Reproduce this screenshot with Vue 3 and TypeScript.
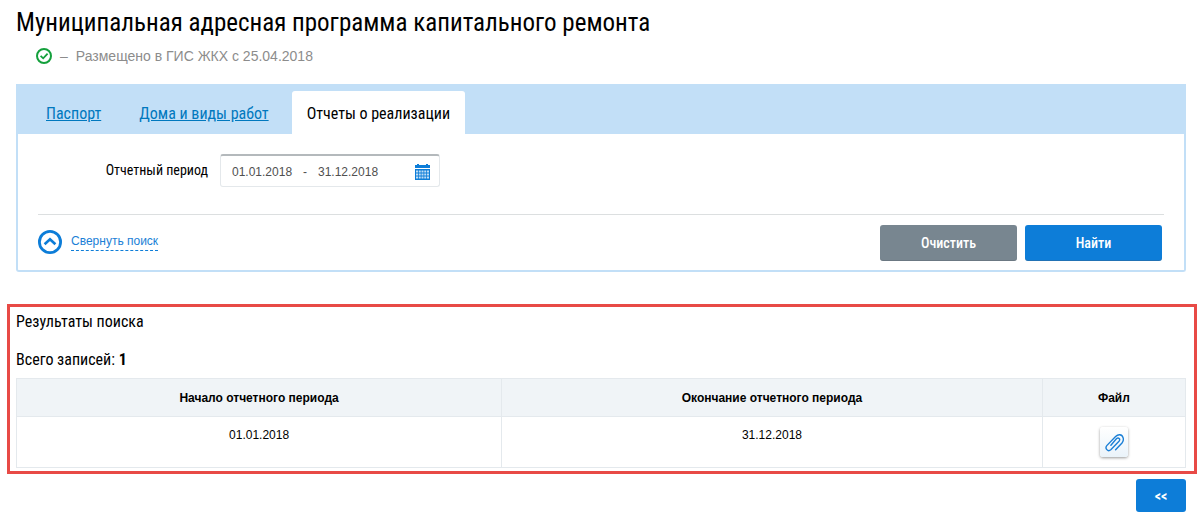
<script setup lang="ts">
import { ref } from 'vue'

interface Report {
  start: string
  end: string
}

const tabs = ['Паспорт', 'Дома и виды работ', 'Отчеты о реализации']
const activeTab = ref(2)
const periodStart = ref('01.01.2018')
const periodEnd = ref('31.12.2018')
const reports: Report[] = [{ start: '01.01.2018', end: '31.12.2018' }]

function clearPeriod(): void {
  periodStart.value = ''
  periodEnd.value = ''
}
</script>

<template>
  <main class="page">
    <header class="inset">
      <h1 class="title">Муниципальная адресная программа капитального ремонта</h1>
      <p class="status">
        <svg class="status-icon" viewBox="0 0 16 16" aria-hidden="true">
          <circle cx="8" cy="8" r="7" fill="none" stroke="#14a03c" stroke-width="2" />
          <path d="M4.6 7.8 7.2 10.3 11.6 5.6" fill="none" stroke="#14a03c" stroke-width="1.8" />
        </svg>
        <span>–</span>
        <span>Размещено в ГИС ЖКХ с 25.04.2018</span>
      </p>
    </header>

    <section class="panel">
      <nav class="tabs">
        <a
          v-for="(tab, i) in tabs"
          :key="tab"
          href="#"
          class="tab"
          :class="{ active: i === activeTab }"
          @click.prevent="activeTab = i"
        >{{ tab }}</a>
      </nav>
      <form class="search" @submit.prevent>
        <div class="field">
          <label class="label" for="period-start">Отчетный период</label>
          <div class="range">
            <input id="period-start" v-model="periodStart" class="date" type="text" />
            <span class="dash">-</span>
            <input v-model="periodEnd" class="date" type="text" aria-label="Конец отчетного периода" />
            <button class="calendar" type="button" aria-label="Календарь">
              <svg viewBox="0 0 15 16" aria-hidden="true">
                <path d="M0 1h2V0h2v1h7V0h2v1h2v3H0z" fill="#0d7dd8" />
                <path d="M0 5h15v11H0z" fill="#0d7dd8" />
                <path
                  d="M1 7.500h13M1 10.500h13M1 13.500h13"
                  stroke="#fff"
                  stroke-width="2"
                  stroke-dasharray="2 .75"
                  fill="none"
                  opacity=".75"
                />
              </svg>
            </button>
          </div>
        </div>
        <div class="actions">
          <button class="collapse" type="button">
            <svg class="collapse-icon" viewBox="0 0 24 24" aria-hidden="true">
              <circle cx="12" cy="12" r="10.6" fill="none" stroke="#0d7dd8" stroke-width="2.8" />
              <path d="M6.600 14.300 12 9.200 17.400 14.300" fill="none" stroke="#0d7dd8" stroke-width="2.600" />
            </svg>
            <span class="collapse-text">Свернуть поиск</span>
          </button>
          <button class="button gray" type="button" @click="clearPeriod">Очистить</button>
          <button class="button" type="submit">Найти</button>
        </div>
      </form>
    </section>

    <section class="results">
      <h2 class="line">Результаты поиска</h2>
      <p class="line total">Всего записей: <b>{{ reports.length }}</b></p>
      <table class="table">
        <colgroup>
          <col class="col-start" />
          <col class="col-end" />
          <col />
        </colgroup>
        <thead>
          <tr>
            <th scope="col">Начало отчетного периода</th>
            <th scope="col">Окончание отчетного периода</th>
            <th scope="col">Файл</th>
          </tr>
        </thead>
        <tbody>
          <tr v-for="report in reports" :key="report.start">
            <td>{{ report.start }}</td>
            <td>{{ report.end }}</td>
            <td>
              <button class="file" type="button" aria-label="Файл">
                <svg viewBox="0 0 20 20" aria-hidden="true">
                  <path
                    d="M11.600 17.800 18 11c2.600-3.200 1.200-7.800-2.200-8.200-1.700-.2-3 .6-4.200 1.800L2.800 13.600c-2.200 2.800 1 6.600 4 4.200L15 9.200c1.800-2.200-.6-4.200-2.400-2.600L6.900 13.200"
                    fill="none"
                    stroke="#1b7fd6"
                    stroke-width="1.400"
                    stroke-linecap="round"
                  />
                </svg>
              </button>
            </td>
          </tr>
        </tbody>
      </table>
    </section>

    <footer class="pager">
      <button class="back" type="button">&lt;&lt;</button>
    </footer>
  </main>
</template>

<style>
body {
  margin: 0;
  background: #fff;
}
</style>

<style scoped>
* {
  box-sizing: border-box;
}

.page {
  padding: 8px 7px 16px;
  color: #000;
  font-family: "Liberation Sans", Arial, sans-serif;
  font-size: 12px;
}

button,
input {
  margin: 0;
  padding: 0;
  border: 0;
  background: none;
  font: inherit;
  color: inherit;
}

button {
  cursor: pointer;
}

svg {
  display: block;
}

.title,
.tab,
.label,
.button,
.back,
.line {
  font-family: "Roboto Condensed", "Liberation Sans Narrow", Roboto, sans-serif;
}

.inset {
  padding: 0 9px;
}

.title {
  margin: 0;
  font-size: 25px;
  line-height: 30px;
  font-weight: 400;
}

.status {
  display: flex;
  align-items: center;
  gap: 8px;
  margin: 8px 0 0 20px;
  color: #8c8c8c;
  font-size: 14px;
  line-height: 20px;
}

.status-icon {
  width: 16px;
  height: 16px;
}

.panel {
  margin: 18px 11px 0 9px;
  border: 2px solid #c2dff7;
  border-top: 0;
  border-radius: 0 0 3px 3px;
}

.tabs {
  display: flex;
  gap: 8px;
  padding: 7px 13px 0;
  background: #c2dff7;
}

.tab {
  padding: 2px 15px 0;
  color: #0078be;
  font-size: 16px;
  line-height: 41px;
}

.tab.active {
  border-radius: 3px 3px 0 0;
  background: #fff;
  color: #000;
  text-decoration: none;
}

.search {
  padding: 20px 20px 9px;
}

.field {
  display: flex;
  align-items: center;
  gap: 12px;
  padding-bottom: 27px;
}

.label {
  width: 170px;
  padding-bottom: 2px;
  font-size: 14px;
  text-align: right;
}

.range {
  display: flex;
  align-items: center;
  width: 220px;
  height: 33px;
  padding: 1px 9px 0 11px;
  border: 1px solid #e4e8eb;
  border-top: 2px solid #b4b9bc;
  border-radius: 3px;
  color: #505050;
}

.date {
  width: 64px;
}

.dash {
  width: 22px;
  padding-left: 7px;
}

.calendar {
  width: 15px;
  height: 16px;
  margin-left: auto;
}

.actions {
  display: flex;
  gap: 8px;
  padding: 10px 2px 0 0;
  border-top: 1px solid #dcdfe0;
}

.collapse {
  display: flex;
  align-items: center;
  gap: 9px;
  height: 34px;
  margin-right: auto;
  color: #1b7fd6;
}

.collapse-icon {
  width: 24px;
  height: 24px;
}

.collapse-text {
  padding-bottom: 1px;
  border-bottom: 1px dashed #0d7dd8;
  line-height: 16px;
}

.button,
.back {
  border-radius: 3px;
  background: #0d7dd8;
  color: #fff;
}

.button {
  width: 137px;
  height: 36px;
  box-shadow: inset 0 -1px rgb(80 90 100 / 30%);
  font-size: 14px;
  font-weight: 500;
}

.gray {
  background: #788690;
}

.results {
  margin-top: 32px;
  padding: 5px 8px 3px 6px;
  border: 3px solid #e84a46;
}

.line {
  margin: 0;
  font-size: 16px;
  line-height: 20px;
  font-weight: 400;
}

.total {
  margin: 18px 0 8px;
}

.table {
  width: 100%;
  border-collapse: collapse;
  table-layout: fixed;
}

.col-start {
  width: 41.5%;
}

.col-end {
  width: 46.25%;
}

th,
td {
  padding: 0;
  border: 1px solid #e4e9ed;
  text-align: center;
}

th {
  height: 38px;
  background: #f0f4f7;
}

td {
  height: 51px;
  padding-top: 10px;
  line-height: 16px;
  vertical-align: top;
}

.file {
  display: inline-block;
  width: 28px;
  height: 30px;
  padding: 5px 4px;
  border-radius: 3px;
  background: linear-gradient(#fff, #eaf3fa);
  box-shadow: 0 1px 3px rgb(0 0 0 / 40%);
}

.pager {
  display: flex;
  justify-content: flex-end;
  padding: 5px 11px 0;
}

.back {
  width: 50px;
  height: 33px;
  font-size: 14px;
  font-weight: 700;
}
</style>
